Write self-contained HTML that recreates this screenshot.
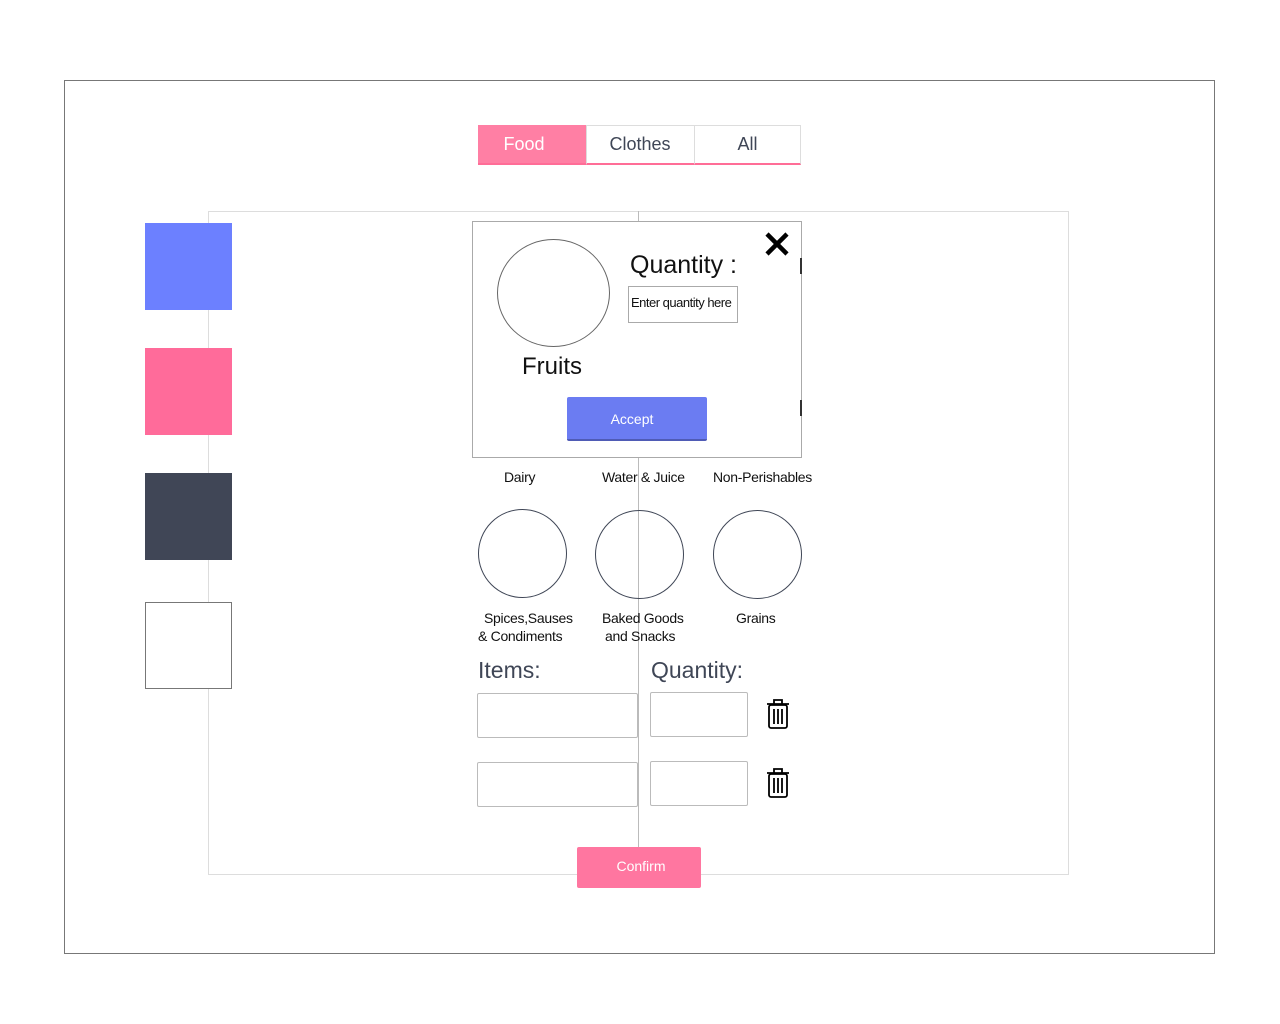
<!DOCTYPE html>
<html><head><meta charset="utf-8"><style>
*{box-sizing:border-box;margin:0;padding:0}
body{width:1280px;height:1024px;background:#fff;position:relative;font-family:"Liberation Sans",sans-serif;overflow:hidden}
.a{position:absolute}
.t{position:absolute;white-space:nowrap;color:#111}
.s{letter-spacing:-0.3px}
.circ{position:absolute;border:1px solid #3f4656;border-radius:50%}
.inp{position:absolute;border:1px solid #bbb;border-radius:2px;background:#fff}
</style></head><body>
<div class="a" style="left:64px;top:80px;width:1151px;height:874px;border:1px solid #777"></div>
<div class="a" style="left:208px;top:211px;width:861px;height:664px;border:1px solid #ddd"></div>
<div class="a" style="left:638px;top:211px;width:1px;height:664px;background:#bbb"></div>

<!-- tabs -->
<div class="a" style="left:478px;top:125px;width:108px;height:40px;background:#ff7fa4;border-bottom:2px solid #ff6d97"></div>
<div class="t" style="left:470px;top:134px;width:108px;text-align:center;font-size:18px;color:#fff">Food</div>
<div class="a" style="left:586px;top:125px;width:108px;height:40px;border:1px solid #ddd;border-bottom:2px solid #ff6d97;border-right:none"></div>
<div class="t" style="left:586px;top:134px;width:108px;text-align:center;font-size:18px;color:#3f4656">Clothes</div>
<div class="a" style="left:694px;top:125px;width:107px;height:40px;border:1px solid #ddd;border-bottom:2px solid #ff6d97"></div>
<div class="t" style="left:694px;top:134px;width:107px;text-align:center;font-size:18px;color:#3f4656">All</div>

<!-- side squares -->
<div class="a" style="left:145px;top:223px;width:87px;height:87px;background:#6c80ff"></div>
<div class="a" style="left:145px;top:348px;width:87px;height:87px;background:#ff6b9a"></div>
<div class="a" style="left:145px;top:473px;width:87px;height:87px;background:#404656"></div>
<div class="a" style="left:145px;top:602px;width:87px;height:87px;border:1px solid #777;background:#fff"></div>

<!-- modal -->
<div class="a" style="left:472px;top:221px;width:330px;height:237px;border:1px solid #aaa;background:#fff"></div>
<div class="a" style="left:800px;top:258px;width:2px;height:16px;background:#333"></div>
<div class="a" style="left:800px;top:400px;width:2px;height:16px;background:#333"></div>
<div class="circ" style="left:497px;top:239px;width:113px;height:108px;border-color:#666"></div>
<div class="t" style="left:522px;top:353px;font-size:24px">Fruits</div>
<div class="t" style="left:630px;top:251px;font-size:25px">Quantity :</div>
<div class="a" style="left:628px;top:286px;width:110px;height:37px;border:1px solid #aaa"></div>
<div class="t" style="left:631px;top:295px;font-size:13px;letter-spacing:-0.5px">Enter quantity here</div>
<svg class="a" style="left:763px;top:231px" width="28" height="26"><path d="M4 3L24 23M24 3L4 23" stroke="#000" stroke-width="4.5"/></svg>
<div class="a" style="left:567px;top:397px;width:140px;height:44px;background:#6b7cf2;border-radius:2px;border-bottom:2px solid #4f5bb5"></div>
<div class="t" style="left:562px;top:411px;width:140px;text-align:center;font-size:14px;color:#fff">Accept</div>

<!-- categories -->
<div class="t s" style="left:504px;top:469px;font-size:14px">Dairy</div>
<div class="t s" style="left:602px;top:469px;font-size:14px">Water &amp; Juice</div>
<div class="t s" style="left:713px;top:469px;font-size:14px">Non-Perishables</div>
<div class="circ" style="left:478px;top:509px;width:89px;height:89px"></div>
<div class="circ" style="left:595px;top:510px;width:89px;height:89px"></div>
<div class="circ" style="left:713px;top:510px;width:89px;height:89px"></div>
<div class="t s" style="left:484px;top:610px;font-size:14px">Spices,Sauses</div>
<div class="t s" style="left:478px;top:628px;font-size:14px">&amp; Condiments</div>
<div class="t s" style="left:602px;top:610px;font-size:14px">Baked Goods</div>
<div class="t s" style="left:605px;top:628px;font-size:14px">and Snacks</div>
<div class="t s" style="left:736px;top:610px;font-size:14px">Grains</div>

<div class="t" style="left:478px;top:657px;font-size:23px;color:#3f4656">Items:</div>
<div class="t" style="left:651px;top:657px;font-size:23px;color:#3f4656">Quantity:</div>
<div class="inp" style="left:477px;top:693px;width:161px;height:45px"></div>
<div class="inp" style="left:650px;top:692px;width:98px;height:45px"></div>
<div class="inp" style="left:477px;top:762px;width:161px;height:45px"></div>
<div class="inp" style="left:650px;top:761px;width:98px;height:45px"></div>
<svg class="a" style="left:765px;top:698px" width="26" height="32"><g fill="none" stroke="#000" stroke-width="1.8"><path d="M2 6H24M9 6V2H17V6"/><rect x="4" y="7" width="18" height="23" rx="2"/><path d="M9 11V26M13 11V26M17 11V26"/></g></svg>
<svg class="a" style="left:765px;top:767px" width="26" height="32"><g fill="none" stroke="#000" stroke-width="1.8"><path d="M2 6H24M9 6V2H17V6"/><rect x="4" y="7" width="18" height="23" rx="2"/><path d="M9 11V26M13 11V26M17 11V26"/></g></svg>

<div class="a" style="left:577px;top:847px;width:124px;height:41px;background:#ff76a0;border-radius:2px"></div>
<div class="t" style="left:579px;top:858px;width:124px;text-align:center;font-size:14px;color:#fff">Confirm</div>
</body></html>
